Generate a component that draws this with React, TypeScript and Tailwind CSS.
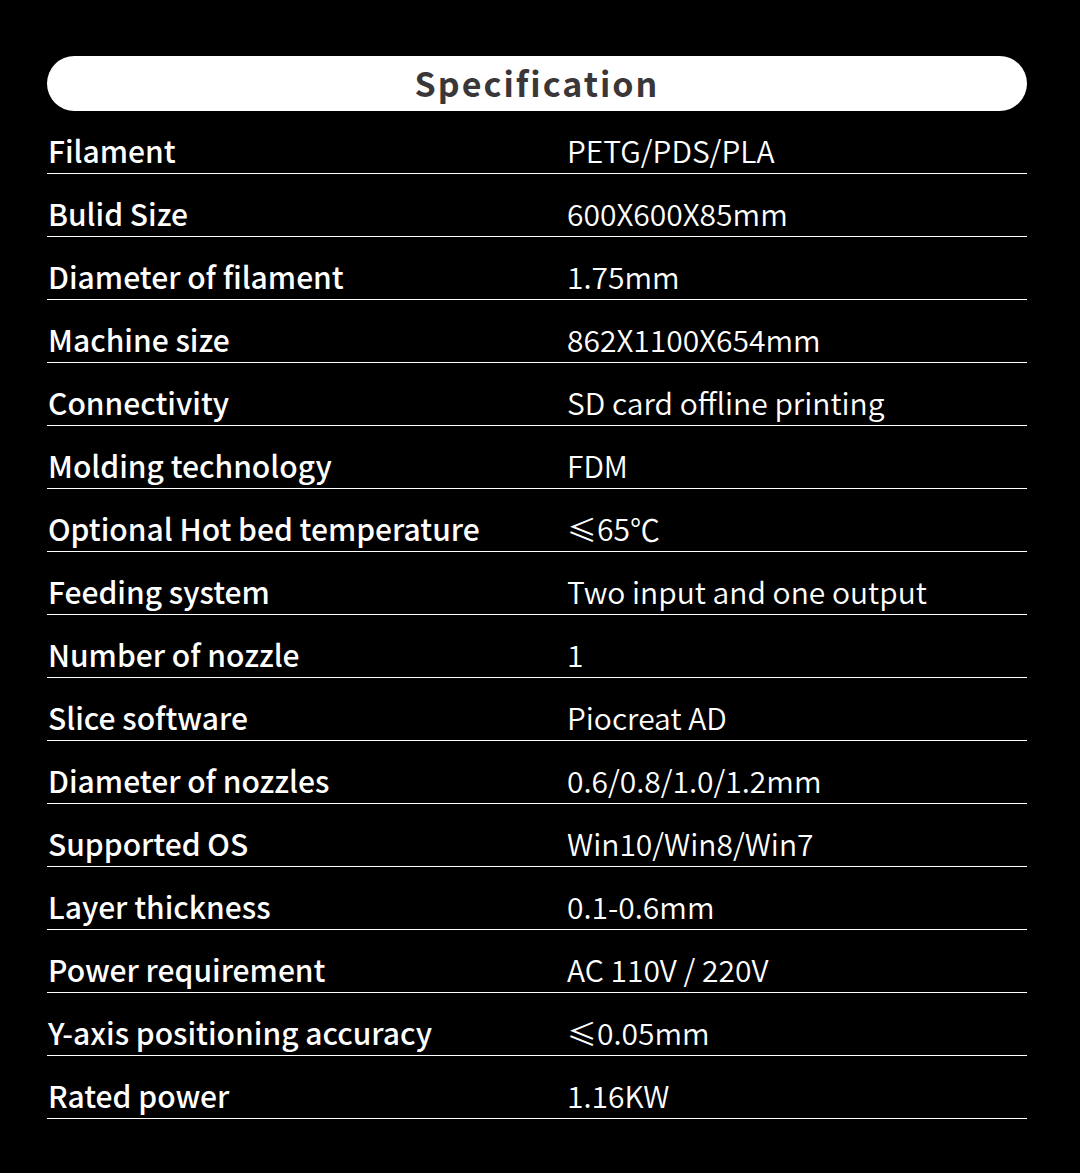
import * as React from 'react';

const specs: [string, string][] = [
  ['Filament', 'PETG/PDS/PLA'],
  ['Bulid Size', '600X600X85mm'],
  ['Diameter of filament', '1.75mm'],
  ['Machine size', '862X1100X654mm'],
  ['Connectivity', 'SD card offline printing'],
  ['Molding technology', 'FDM'],
  ['Optional Hot bed temperature', '≤65℃'],
  ['Feeding system', 'Two input and one output'],
  ['Number of nozzle', '1'],
  ['Slice software', 'Piocreat AD'],
  ['Diameter of nozzles', '0.6/0.8/1.0/1.2mm'],
  ['Supported OS', 'Win10/Win8/Win7'],
  ['Layer thickness', '0.1-0.6mm'],
  ['Power requirement', 'AC 110V / 220V'],
  ['Y-axis positioning accuracy', '≤0.05mm'],
  ['Rated power', '1.16KW'],
];

export default function App() {
  return (
    <div
      className="w-[1080px] h-[1173px] bg-black pl-[47px] pr-[53px] pt-[56px]"
      style={{ fontFamily: '"Noto Sans CJK SC", "Noto Sans", sans-serif' }}
    >
      <div className="h-[55px] rounded-full bg-white flex items-center justify-center">
        <h1 className="text-[34px] leading-none font-bold text-[#3b3738] tracking-[2px] pb-px">
          Specification
        </h1>
      </div>
      <div>
        {specs.map(([label, value]) => (
          <div
            key={label}
            className="h-[63px] border-b border-white flex items-end pb-[8px] text-white text-[30px] leading-[30px]"
          >
            <div className="w-[520px] pl-px font-medium">{label}</div>
            <div className="flex-1 font-[350]">{value}</div>
          </div>
        ))}
      </div>
    </div>
  );
}
